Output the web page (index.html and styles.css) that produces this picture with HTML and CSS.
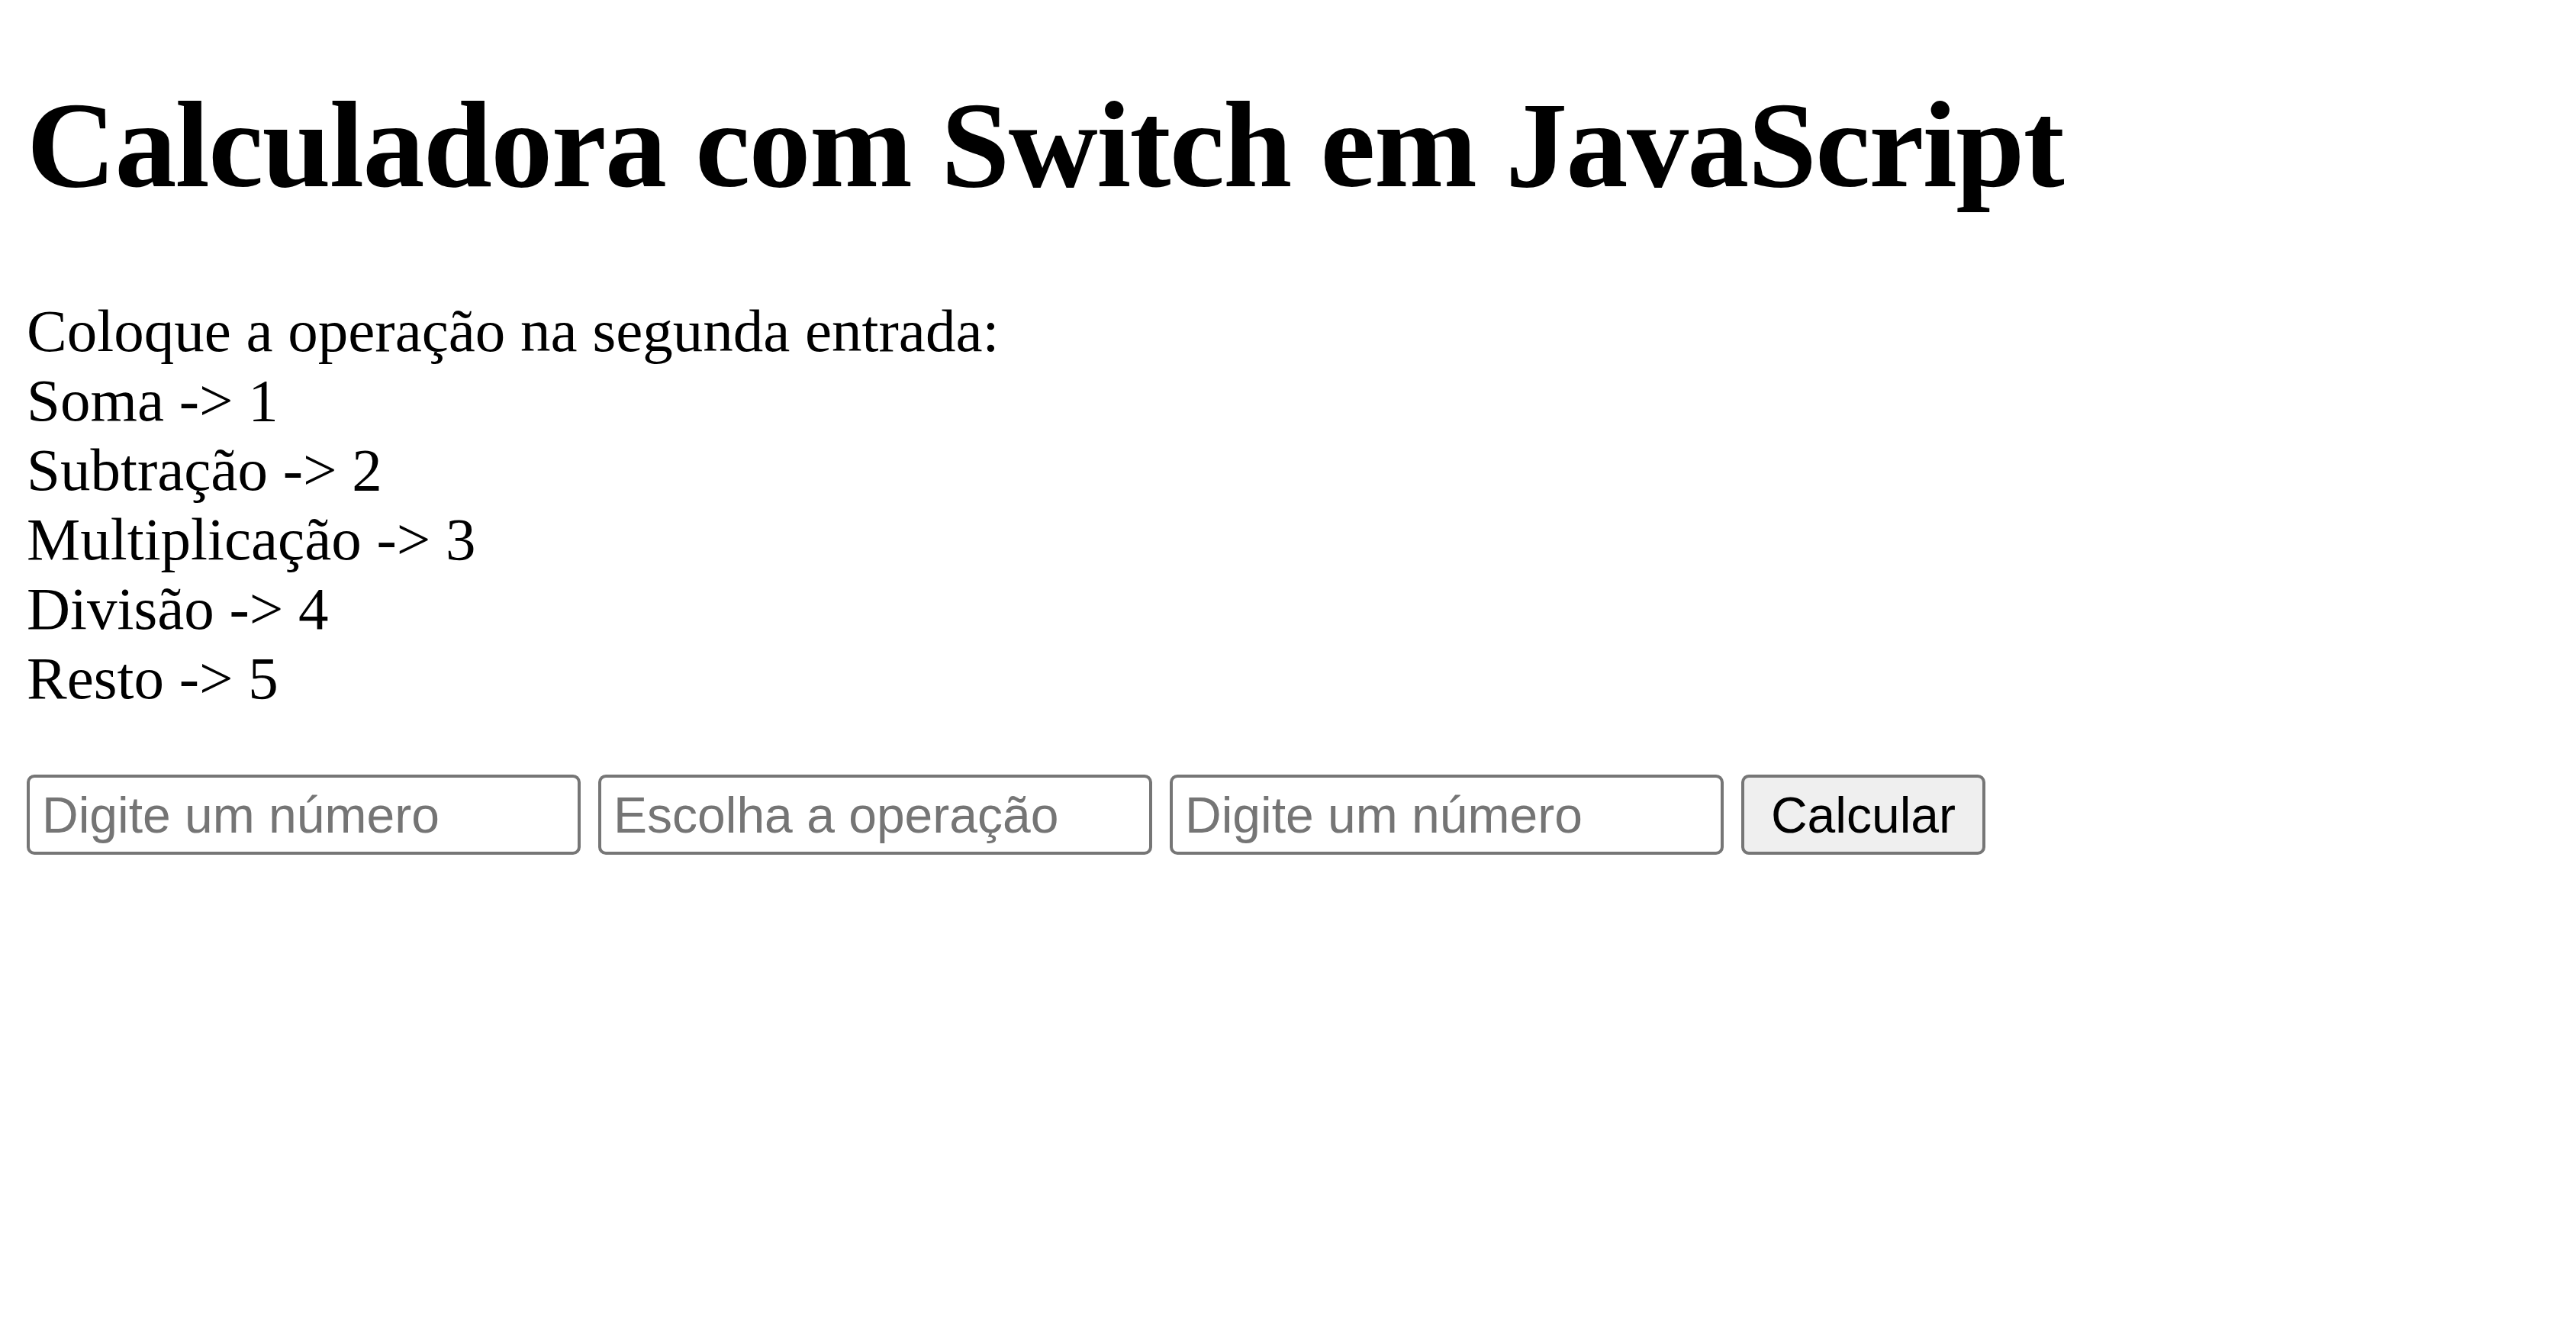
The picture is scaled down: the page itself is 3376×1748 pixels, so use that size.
FILE: index.html
```html
<!DOCTYPE html>
<html lang="pt-BR">
<head>
<meta charset="utf-8">
<title>Calculadora com Switch em JavaScript</title>
<link rel="stylesheet" href="styles.css">
</head>
<body>
<h1 class="title">Calculadora com Switch em JavaScript</h1>
<p class="instructions">Coloque a operação na segunda entrada:<br>Soma -&gt; 1<br>Subtração -&gt; 2<br>Multiplicação -&gt; 3<br>Divisão -&gt; 4<br>Resto -&gt; 5</p>
<form class="calc">
<input class="field" type="text" placeholder="Digite um número">
<input class="field" type="text" placeholder="Escolha a operação">
<input class="field" type="text" placeholder="Digite um número">
<button class="btn" type="button">Calcular</button>
</form>
</body>
</html>
```
FILE: styles.css
```css
html, body {
  margin: 0;
  padding: 0;
  background: #ffffff;
}
body {
  padding: 95px 35px 0 35px;
  font-family: "Liberation Serif", "Times New Roman", serif;
  color: #000000;
}
.title {
  margin: 0;
  font-size: 162px;
  line-height: 190px;
  letter-spacing: -1.6px;
  font-weight: bold;
}
.instructions {
  margin: 103px 0 0 0;
  font-size: 79px;
  line-height: 91px;
}
.calc {
  margin-top: 81px;
  display: flex;
  gap: 23px;
  align-items: stretch;
}
.field {
  box-sizing: border-box;
  width: 726px;
  height: 105px;
  border: 4px solid #767676;
  border-radius: 10px;
  padding: 0 0 0 16px;
  font-family: "Liberation Sans", Arial, sans-serif;
  font-size: 66px;
  color: #000000;
  background: #ffffff;
  outline: none;
}
.field::placeholder {
  color: #757575;
}
.btn {
  box-sizing: border-box;
  width: 320px;
  height: 105px;
  border: 4px solid #767676;
  border-radius: 10px;
  background: #efefef;
  font-family: "Liberation Sans", Arial, sans-serif;
  font-size: 66px;
  color: #000000;
  padding: 0;
}
```
